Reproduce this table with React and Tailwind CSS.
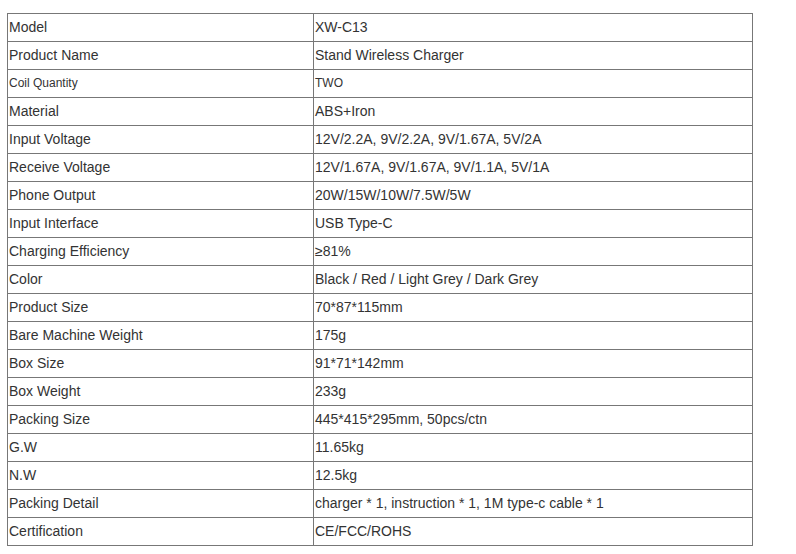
const rows = [
  ["Model", "XW-C13"],
  ["Product Name", "Stand Wireless Charger"],
  ["Coil Quantity", "TWO", true],
  ["Material", "ABS+Iron"],
  ["Input Voltage", "12V/2.2A, 9V/2.2A, 9V/1.67A, 5V/2A"],
  ["Receive Voltage", "12V/1.67A, 9V/1.67A, 9V/1.1A, 5V/1A"],
  ["Phone Output", "20W/15W/10W/7.5W/5W"],
  ["Input Interface", "USB Type-C"],
  ["Charging Efficiency", "≥81%"],
  ["Color", "Black / Red / Light Grey / Dark Grey"],
  ["Product Size", "70*87*115mm"],
  ["Bare Machine Weight", "175g"],
  ["Box Size", "91*71*142mm"],
  ["Box Weight", "233g"],
  ["Packing Size", "445*415*295mm, 50pcs/ctn"],
  ["G.W", "11.65kg"],
  ["N.W", "12.5kg"],
  ["Packing Detail", "charger * 1, instruction * 1, 1M type-c cable * 1"],
  ["Certification", "CE/FCC/ROHS"],
];

export default function App() {
  return (
    <div className="w-[796px] h-[554px] bg-white pt-[13px] pl-[7px]" style={{ fontFamily: '"Liberation Sans", Arial, sans-serif' }}>
      <table className="border-collapse w-[746px] table-fixed text-[#333]">
        <colgroup>
          <col className="w-[306px]" />
          <col />
        </colgroup>
        <tbody>
          {rows.map(([k, v, small]) => (
            <tr key={k} className="h-[28px]">
              <td className={`border border-[#777] px-[1px] pt-0 pb-[2px] align-middle leading-none ${small ? "text-[12px]" : "text-[14px]"}`}>{k}</td>
              <td className={`border border-[#777] px-[1px] pt-0 pb-[2px] align-middle leading-none ${small ? "text-[12px]" : "text-[14px]"}`}>{v}</td>
            </tr>
          ))}
        </tbody>
      </table>
    </div>
  );
}
